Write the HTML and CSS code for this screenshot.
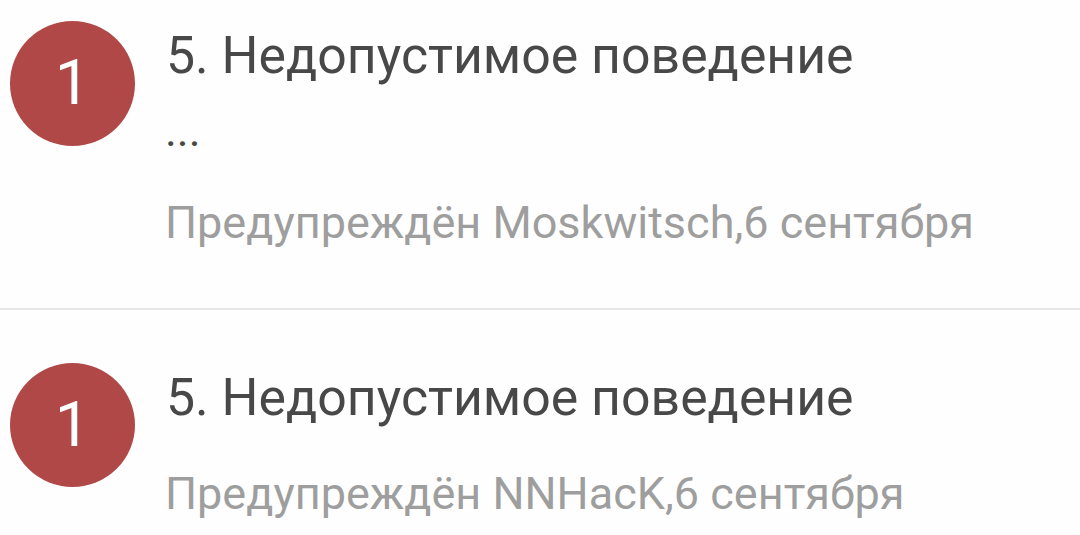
FILE: index.html
```html
<!DOCTYPE html>
<html lang="ru">
<head>
    <meta charset="UTF-8" />
    <meta name="viewport" content="width=device-width, initial-scale=1.0"/>
    <title>Предупреждения</title>
    <link rel="stylesheet" href="styles.css">
</head>
<body>

    <ul class="warnings">
        <li class="warning">
            <span class="points">1</span>
            <div class="warning-info">
                <h2 class="reason">5. Недопустимое поведение</h2>
                <p class="note">...</p>
                <p class="meta">Предупреждён Moskwitsch,6 сентября</p>
            </div>
        </li>
        <li class="warning">
            <span class="points">1</span>
            <div class="warning-info">
                <h2 class="reason">5. Недопустимое поведение</h2>
                <p class="meta">Предупреждён NNHacK,6 сентября</p>
            </div>
        </li>
    </ul>

</body>
</html>
```
FILE: styles.css
```css
* {
    box-sizing: border-box;
}

body {
    margin: 0;
    background-color: #fefefe;
    font-family: Roboto, "Noto Sans", sans-serif;
    overflow: hidden;
}

.warnings {
    list-style: none;
    margin: 0;
    padding: 0;
}

.warning {
    display: flex;
    align-items: flex-start;
    gap: 30px;
    padding: 21px 10px 0;
    height: 310px;
    border-bottom: 2px solid #e6e6e6;
}

.warning + .warning {
    height: 225px;
    padding-top: 53px;
    border-bottom: none;
}

.points {
    flex: none;
    width: 125px;
    height: 125px;
    border-radius: 50%;
    background-color: #b04848;
    color: #fff;
    font-size: 63px;
    line-height: 124px;
    text-align: center;
}

.warning + .warning .points {
    height: 124px;
}

.warning-info {
    padding-top: 1px;
    white-space: nowrap;
}

.reason {
    margin: 0;
    padding-left: 1px;
    color: #484848;
    font-size: 51.8px;
    font-weight: 400;
    line-height: 68px;
}

.note {
    margin: 11px 0 0;
    color: #484848;
    font-size: 45px;
    line-height: 60px;
}

.meta {
    margin: 32px 0 0;
    color: #9e9e9e;
    font-size: 45px;
    line-height: 60px;
}
```
